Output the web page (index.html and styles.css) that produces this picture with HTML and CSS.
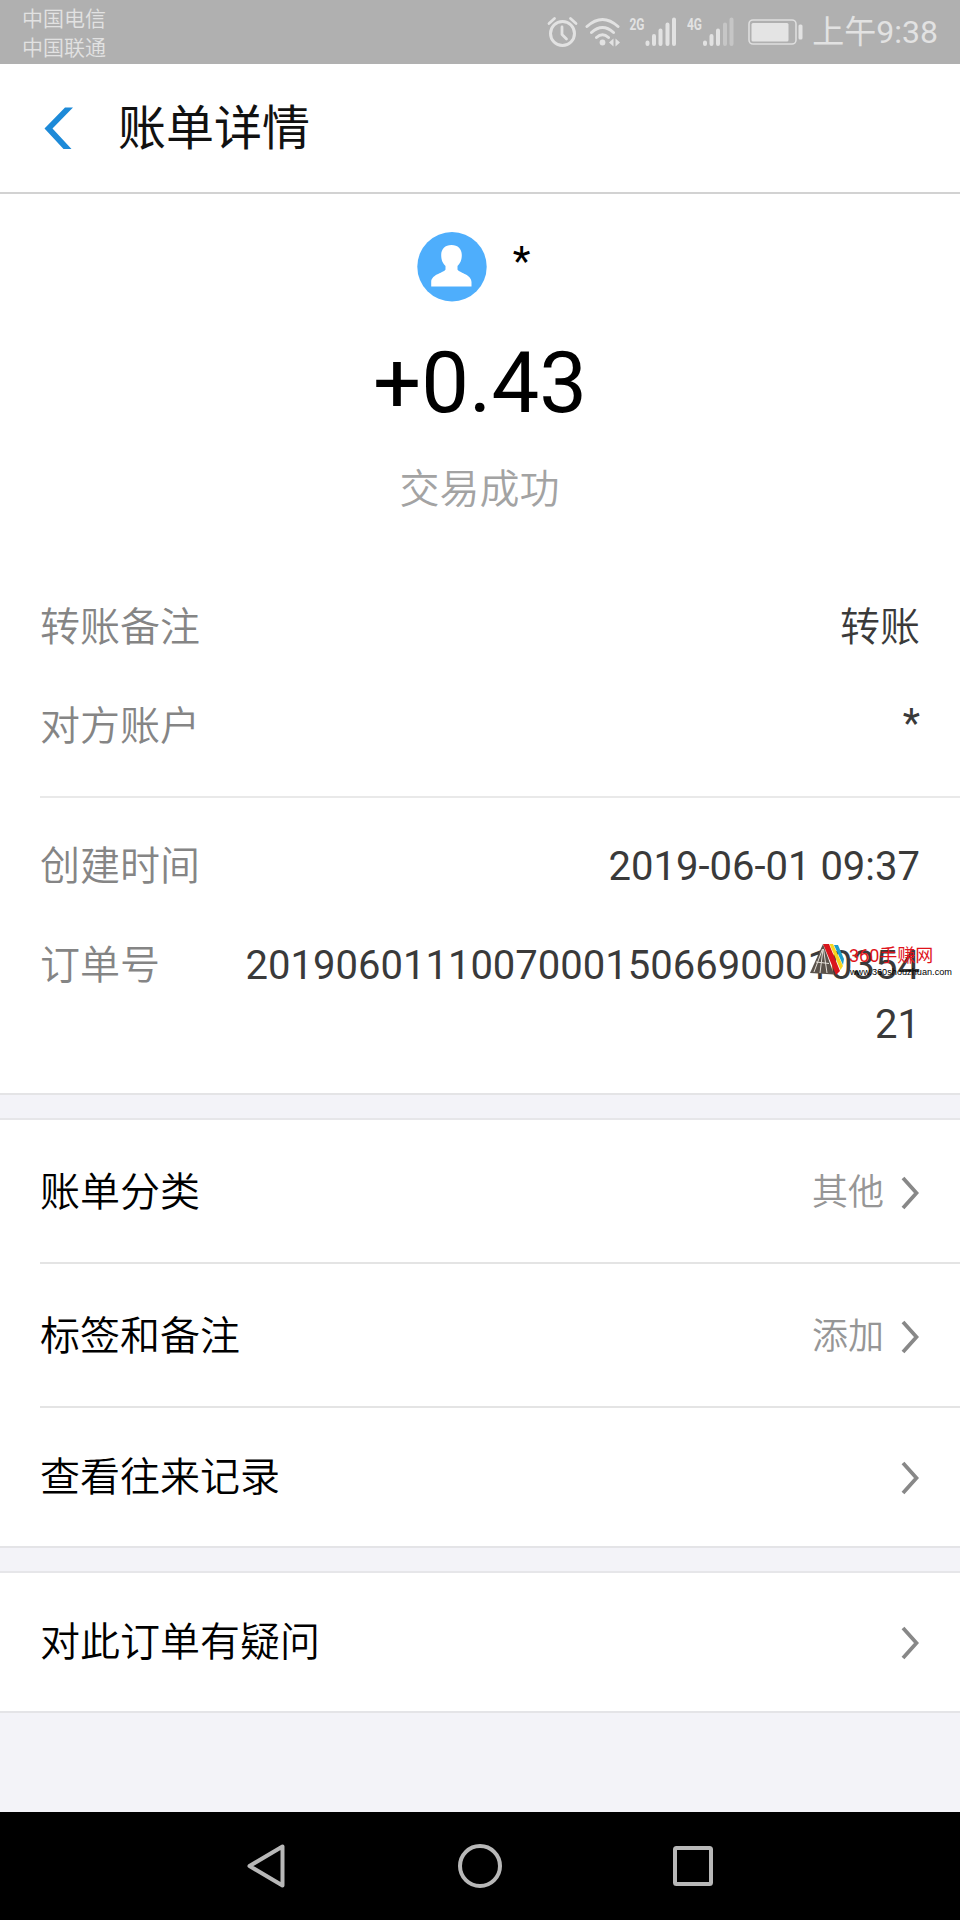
FILE: index.html
```html
<!DOCTYPE html>
<html lang="zh-CN">
<head>
  <meta charset="UTF-8">
  <title>账单详情</title>
  <link rel="stylesheet" href="styles.css">
</head>
<body>
  <div class="status-bar">
    <div class="carriers">
      <div>中国电信</div>
      <div>中国联通</div>
    </div>
    <div class="status-icons">
      <!-- alarm -->
      <svg class="icon-alarm" width="32" height="32" viewBox="0 0 32 32">
        <circle cx="15.500" cy="17.500" r="12" fill="none" stroke="#e2e2e2" stroke-width="3"/>
        <path d="M15 11v7.500l4.500 4.500M2 7.500L7.500 2.500M23.500 2.500l5.500 5" fill="none" stroke="#e2e2e2" stroke-width="2.800" stroke-linecap="round"/>
      </svg>
      <!-- wifi -->
      <svg class="icon-wifi" width="36" height="32" viewBox="0 0 36 32">
        <path d="M2 10.500Q17.500-3.500 33 10.500M6.500 16.500Q17.500 6.500 28.500 16.500M11.500 21.500Q17.500 16 23.500 21.500" fill="none" stroke="#e2e2e2" stroke-width="3" stroke-linecap="round"/>
        <circle cx="17.500" cy="26.500" r="2.900" fill="#e2e2e2"/>
        <path d="M24 26.500l4.500-4v8zM30.500 22.500l4.500 4-4.500 4z" fill="#e2e2e2"/>
      </svg>
      <svg class="icon-signal" width="50" height="34" viewBox="0 0 50 34">
        <text class="net" x="0.500" y="15" textLength="15" lengthAdjust="spacingAndGlyphs">2G</text>
        <path d="M18.500 29v-1.500M25 29v-8M31.500 29v-13.500M38.500 29v-19.500M45 29v-24.500" stroke="#e2e2e2" stroke-width="4" stroke-linecap="round"/>
      </svg>
      <svg class="icon-signal" width="50" height="34" viewBox="0 0 50 34">
        <text class="net" x="0" y="15" textLength="15" lengthAdjust="spacingAndGlyphs">4G</text>
        <path d="M18 29v-1.500M24.500 29v-8M31 29v-13.500" stroke="#e2e2e2" stroke-width="4" stroke-linecap="round"/>
        <path d="M38 29v-19.500M44.500 29v-24.500" stroke="#c6c6c6" stroke-width="4" stroke-linecap="round"/>
      </svg>
      <svg class="icon-battery" width="56" height="28" viewBox="0 0 56 28">
        <rect x="1" y="2" width="47" height="24" rx="4" fill="none" stroke="#dedede" stroke-width="1.600"/>
        <rect x="3.500" y="5" width="37" height="18.500" rx="1.500" fill="#e4e4e4"/>
        <rect x="50.500" y="6.500" width="4" height="15" rx="1.500" fill="#e2e2e2"/>
      </svg>
      <span class="clock">上午9:38</span>
    </div>
  </div>

  <header class="header">
    <svg class="back" width="30" height="43" viewBox="0 0 30 43">
      <path d="M29 0.500H21L0.500 21.500L19.500 42H27.500L8.500 21.500Z" fill="#1d8ad8"/>
    </svg>
    <h1 class="title">账单详情</h1>
  </header>

  <section class="bill">
    <div class="payee">
      <svg class="avatar" width="70" height="70" viewBox="0 0 70 70">
        <circle cx="35" cy="34.700" r="34.700" fill="#4eaefc"/>
        <path d="M34.500 13C41 13 44.800 17 44.800 23C44.800 28.500 43 31.500 40.500 34V37.500C41 40.500 54.500 42 54.500 50V54.500H14.200V50C14.200 42 28 40.500 28.500 37.500V34C26 31.500 24.200 28.500 24.200 23C24.200 17 28 13 34.500 13Z" fill="#fff"/>
      </svg>
      <span class="payee-name">*</span>
    </div>
    <div class="amount">+0.43</div>
    <div class="state">交易成功</div>

    <dl class="details">
      <div class="detail"><dt>转账备注</dt><dd class="cjk">转账</dd></div>
      <div class="detail"><dt>对方账户</dt><dd class="account">*</dd></div>
    </dl>
    <div class="divider"></div>
    <dl class="details details-order">
      <div class="detail"><dt>创建时间</dt><dd>2019-06-01 09:37</dd></div>
      <div class="detail"><dt>订单号</dt><dd class="order-no">20190601110070001506690001035421</dd></div>
    </dl>

    <!-- site stamp over the order number -->
    <div class="stamp">
      <svg class="stamp-logo" width="36" height="34" viewBox="0 0 36 34">
        <path d="M14 1L1 30L25 31.500Z" fill="#5a524b"/>
        <path d="M13.500 6L5 29M14 6L11 30M14.500 6L18 30M7 19L20 20.500" fill="none" stroke="#e4dfd8" stroke-width="1"/>
        <path d="M14 1H20L31 28L27 32Z" fill="#d9151c"/>
        <path d="M20.500 1H24L34 23L31.500 27Z" fill="#f8d51e"/>
        <path d="M25 2H29L35 16L34 22Z" fill="#1d9ec9"/>
      </svg>
      <div class="stamp-text">
        <div class="stamp-name">360手赚网</div>
        <svg class="stamp-url" width="106" height="12" viewBox="0 0 106 12">
          <text x="1" y="8" textLength="102" lengthAdjust="spacingAndGlyphs">www.360shouzhuan.com</text>
        </svg>
      </div>
    </div>
  </section>

  <ul class="menu">
    <li class="menu-item">
      <span>账单分类</span>
      <span class="menu-value">其他</span>
      <svg class="chevron" width="18" height="34" viewBox="0 0 18 34"><path d="M2 2L15.500 17L2 32" fill="none" stroke="#888" stroke-width="3.800"/></svg>
    </li>
    <li class="menu-item">
      <span>标签和备注</span>
      <span class="menu-value">添加</span>
      <svg class="chevron" width="18" height="34" viewBox="0 0 18 34"><path d="M2 2L15.500 17L2 32" fill="none" stroke="#888" stroke-width="3.800"/></svg>
    </li>
    <li class="menu-item menu-item-short">
      <span>查看往来记录</span>
      <svg class="chevron" width="18" height="34" viewBox="0 0 18 34"><path d="M2 2L15.500 17L2 32" fill="none" stroke="#888" stroke-width="3.800"/></svg>
    </li>
  </ul>

  <ul class="menu">
    <li class="menu-item menu-item-short">
      <span>对此订单有疑问</span>
      <svg class="chevron" width="18" height="34" viewBox="0 0 18 34"><path d="M2 2L15.500 17L2 32" fill="none" stroke="#888" stroke-width="3.800"/></svg>
    </li>
  </ul>

  <nav class="nav-bar">
    <svg width="46" height="46" viewBox="0 0 46 46"><path d="M38.500 3.500V42.500L5.500 23Z" fill="none" stroke="#b8b8b8" stroke-width="4" stroke-linejoin="round"/></svg>
    <svg width="46" height="46" viewBox="0 0 46 46"><circle cx="23" cy="23" r="20" fill="none" stroke="#b8b8b8" stroke-width="4"/></svg>
    <svg width="46" height="46" viewBox="0 0 46 46"><rect x="5" y="5" width="36" height="36" rx="1.500" fill="none" stroke="#b8b8b8" stroke-width="4"/></svg>
  </nav>
</body>
</html>
```

FILE: styles.css
```css
* {
  box-sizing: border-box;
}
body {
  margin: 0;
  height: 1920px;
  display: flex;
  flex-direction: column;
  font-family: Roboto, "Noto Sans CJK SC", sans-serif;
  font-size: 40px;
  line-height: 60px;
  color: #111;
  background-color: #f3f3f8;
}
svg {
  display: block;
  flex: none;
}

.status-bar {
  height: 64px;
  display: flex;
  justify-content: space-between;
  padding: 0 22px 0 22px;
  background-color: #b0b0b0;
  color: #e2e2e2;
}
.carriers {
  padding-top: 5px;
  font-size: 21px;
  line-height: 29px;
  font-weight: 350;
}
.status-icons {
  display: flex;
  align-items: center;
}
.icon-wifi {
  margin-left: 6px;
}
.icon-signal {
  margin-left: 8px;
}
.icon-battery {
  margin-left: 11px;
}
.net {
  font-family: Roboto, sans-serif;
  font-size: 17px;
  font-weight: 700;
  fill: #e2e2e2;
}
.clock {
  margin-left: 8px;
  font-size: 32px;
  font-weight: 400;
  line-height: 67px;
}

.header {
  height: 130px;
  display: flex;
  align-items: center;
  padding-left: 44px;
  background-color: #fff;
  border-bottom: 2px solid #d2d2d2;
}
.title {
  margin: 2px 0 0 44px;
  font-size: 48px;
  font-weight: 400;
}

.bill {
  position: relative;
  height: 901px;
  padding-top: 38px;
  background-color: #fff;
  border-bottom: 2px solid #e4e4e6;
}
.payee {
  display: flex;
  justify-content: center;
  height: 70px;
  padding-right: 13px;
  color: #000;
}
.payee-name {
  margin-left: 26px;
  font-size: 41px;
  line-height: 58px;
}
.amount {
  margin-top: 31px;
  font-size: 85px;
  line-height: 101px;
  text-align: center;
  color: #000;
}
.state {
  margin-top: 26px;
  padding-right: 1px;
  text-align: center;
  font-weight: 350;
  color: #a3a3a3;
}
.details {
  display: flex;
  flex-direction: column;
  gap: 39px;
  margin: 78px 0 0;
  padding: 0 40px;
}
.details-order {
  margin-top: 39px;
}
.detail {
  display: flex;
  justify-content: space-between;
}
.detail dt {
  font-weight: 350;
  color: #858585;
}
.detail dd {
  margin: 0;
  text-align: right;
  color: #3a3a3a;
}
.detail .cjk {
  font-weight: 350;
}
.detail .account {
  line-height: 53px;
}
.detail .order-no {
  width: 680px;
  line-height: 59px;
  word-break: break-all;
}
.divider {
  height: 2px;
  margin: 39px 0 0 40px;
  background-color: #e9e9e9;
}

.stamp {
  position: absolute;
  top: 749px;
  left: 809px;
  display: flex;
}
.stamp-text {
  margin-left: 4px;
}
.stamp-name {
  padding-top: 1px;
  font-size: 18px;
  line-height: 23px;
  color: #e0131b;
}
.stamp-url {
  font-family: "Liberation Sans", Arial, sans-serif;
  font-size: 8.5px;
  fill: #000;
}

.menu {
  margin: 0;
  padding: 0 0 0 40px;
  list-style: none;
  font-weight: 350;
  color: #000;
  background-color: #fff;
  border-bottom: 2px solid #e4e4e7;
}
.menu + .menu {
  margin-top: 23px;
  border-top: 2px solid #e6e6e9;
}
.bill + .menu {
  margin-top: 23px;
  border-top: 2px solid #e6e6e9;
}
.menu-item {
  height: 144px;
  display: flex;
  align-items: center;
  padding: 3px 41px 0 0;
  border-bottom: 2px solid #e4e4e4;
}
.menu-item-short {
  height: 138px;
  padding-top: 2px;
  border-bottom: 0;
}
.menu-value {
  margin-left: auto;
  font-size: 36px;
  line-height: 58px;
  color: #969696;
}
.chevron {
  margin-left: auto;
}
.menu-value + .chevron {
  margin-left: 17px;
}

.nav-bar {
  height: 108px;
  margin-top: auto;
  display: flex;
  justify-content: center;
  align-items: center;
  gap: 167px;
  background-color: #000;
}
```
